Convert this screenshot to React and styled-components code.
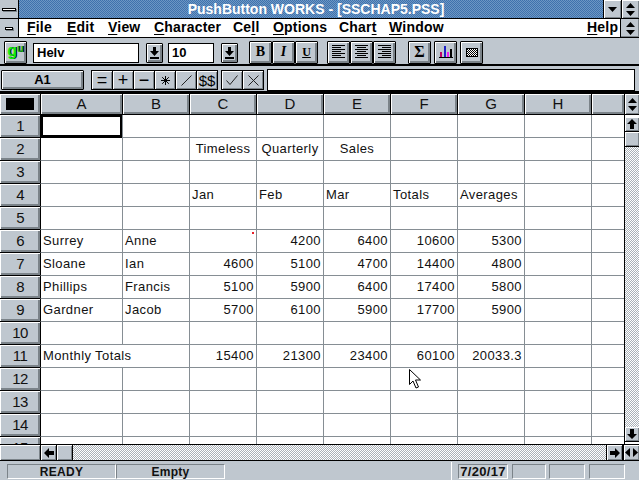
import React from 'react';
import styled, { createGlobalStyle } from 'styled-components';

const Global = createGlobalStyle`
  html, body { margin: 0; padding: 0; background: #c0c7cf; overflow: hidden; }
  * { box-sizing: border-box; }
`;

const FACE = '#bfc7cf';
const SHADE = '#7b8389';
const GRIDLINE = '#868e94';
const SYS = '"Liberation Sans", Arial, sans-serif';

const Screen = styled.div`
  position: relative;
  width: 639px;
  height: 480px;
  display: flex;
  flex-direction: column;
  background: ${FACE};
  font-family: ${SYS};
  overflow: hidden;
`;

const TitleBar = styled.div`
  display: flex;
  height: 19px;
  border-bottom: 1px solid #000;
`;
const TitleText = styled.div`
  flex: 1;
  padding-left: 10px;
  text-align: center;
  color: #fff;
  font-size: 14px;
  font-weight: bold;
  line-height: 18px;
  background: repeating-conic-gradient(#3f72ad 0 25%, #6d97c4 0 50%) 0 0 / 2px 2px;
`;
const SysBox = styled.div`
  width: 19px;
  flex: none;
  background: ${FACE};
  border-right: ${p => (p.$end ? 'none' : '1px solid #000')};
  border-left: ${p => (p.$end ? '1px solid #000' : 'none')};
  box-shadow: ${p => (p.$end ? 'inset -1px -1px 0 #7b8389' : 'none')};
  display: flex;
  align-items: center;
  justify-content: center;
`;
const SysBar = styled.span`
  display: block;
  width: ${p => p.$w}px;
  height: 1px;
  background: #fff;
  border: 1px solid #000;
  box-sizing: content-box;
  box-shadow: 1px 1px 0 ${SHADE};
`;
const CapButton = styled.div`
  width: 18px;
  flex: none;
  background: ${FACE};
  border-left: 1px solid #000;
  box-shadow: inset 1px 1px 0 #fff, inset -1px -1px 0 ${SHADE};
  display: flex;
  align-items: center;
  justify-content: center;
`;

const MenuBar = styled.div`
  display: flex;
  height: 19px;
  background: #fff;
  border-bottom: 1px solid #000;
`;
const MenuList = styled.div`
  flex: 1;
  display: flex;
  padding-left: 8px;
  font-size: 14px;
  font-weight: bold;
  line-height: 16px;
  color: #000;
`;
const MenuItem = styled.span`
  width: ${p => p.$w}px;
  flex: none;
  margin-left: ${p => p.$push || 0}px;
  letter-spacing: 0.2px;
  u { text-underline-offset: 2px; }
`;

const Toolbar = styled.div`
  display: flex;
  align-items: center;
  height: 28px;
  padding: 3px 0 0 4px;
  border-bottom: 2px solid #000;
`;
const ToolButton = styled.div`
  width: 23px;
  height: 23px;
  flex: none;
  margin-left: ${p => p.$gap || 0}px;
  background: ${FACE};
  border: 1px solid #000;
  border-radius: 1px;
  box-shadow: inset 1px 1px 0 #fff, inset -2px -2px 0 ${SHADE};
  display: flex;
  align-items: center;
  justify-content: center;
  padding-bottom: 1px;
  font-family: "Liberation Serif", serif;
  font-weight: bold;
  font-size: ${p => p.$size || 14}px;
  color: #000;
`;
const LogoG = styled.span`
  font-family: ${SYS};
  font-size: 16px;
  line-height: 16px;
  margin-top: -3px;
  color: #12ee12;
  text-shadow: 1px 0 0 #000;
`;
const LogoU = styled(LogoG)`
  font-size: 11px;
  line-height: 11px;
  margin-top: -7px;
  color: #18b018;
`;
const FontField = styled.div`
  width: ${p => p.$w}px;
  height: 20px;
  flex: none;
  margin-left: ${p => p.$gap || 0}px;
  background: #fff;
  border: 1px solid #000;
  font-size: 13px;
  font-weight: bold;
  line-height: 18px;
  padding-left: 3px;
`;
const DropButton = styled.div`
  width: 17px;
  height: 20px;
  flex: none;
  margin-left: ${p => p.$gap}px;
  background: ${FACE};
  border: 1px solid #000;
  border-radius: 1px;
  box-shadow: inset 1px 1px 0 #fff, inset -2px -2px 0 ${SHADE};
  display: flex;
  align-items: center;
  justify-content: center;
`;

const FormulaBar = styled.div`
  display: flex;
  align-items: flex-start;
  height: 28px;
  padding: 3px 4px 0 0;
  border-bottom: 3px solid #000;
`;
const CellRef = styled.div`
  width: 83px;
  height: 20px;
  flex: none;
  margin: 1px 0 0 1px;
  background: ${FACE};
  border: 1px solid #000;
  border-radius: 1px;
  box-shadow: inset 1px 1px 0 #fff, inset -2px -2px 0 ${SHADE};
  text-align: center;
  font-size: 13px;
  font-weight: bold;
  line-height: 17px;
`;
const OpGroup = styled.div`
  display: flex;
  flex: none;
  margin: 1px 0 0 ${p => p.$gap}px;
`;
const OpButton = styled.div`
  width: 22px;
  height: 20px;
  margin-right: -1px;
  background: ${FACE};
  border: 1px solid #000;
  box-shadow: inset 1px 1px 0 #fff, inset -1px -1px 0 ${SHADE};
  display: flex;
  align-items: center;
  justify-content: center;
  font-size: ${p => p.$size || 16}px;
  color: #000;
`;
const EntryField = styled.div`
  flex: 1;
  height: 22px;
  margin-left: 4px;
  background: #fff;
  border: 1px solid #000;
`;

const SheetRow = styled.div`
  display: flex;
  height: 350px;
`;
const Sheet = styled.div`
  flex: 1;
  display: grid;
  grid-template-columns: 40px 82px 67px 67px 67px 67px 67px 67px 67px 33px;
  grid-template-rows: 21px;
  grid-auto-rows: 23px;
  overflow: hidden;
  background: #fff;
  font-size: 13px;
  letter-spacing: 0.4px;
  color: #111;
`;
const ColHead = styled.div`
  background: ${FACE};
  border-left: 1px solid #000;
  border-bottom: 1px solid #000;
  box-shadow: inset 1px 1px 0 #fff, inset -2px -2px 0 ${SHADE};
  text-align: center;
  font-size: 15px;
  line-height: 20px;
  letter-spacing: 0;
  color: #111;
`;
const Corner = styled.div`
  background: ${FACE};
  border-bottom: 1px solid #000;
  box-shadow: inset 1px 1px 0 #fff, inset -2px -2px 0 ${SHADE};
  display: flex;
  align-items: center;
  justify-content: center;
  &::before {
    content: '';
    width: 28px;
    height: 12px;
    background: #000;
  }
`;
const RowHead = styled.div`
  background: ${FACE};
  border-bottom: 1px solid #000;
  box-shadow: inset 1px 1px 0 #fff, inset -2px -2px 0 ${SHADE};
  text-align: center;
  font-size: 15px;
  line-height: 22px;
  letter-spacing: -0.6px;
  color: #111;
`;
const Cell = styled.div`
  position: relative;
  grid-column: span ${p => p.$span || 1};
  border-left: 1px solid ${p => (p.$first ? '#000' : GRIDLINE)};
  border-bottom: 1px solid ${GRIDLINE};
  line-height: 22px;
  padding: 0 2px;
  white-space: nowrap;
  text-align: ${p => p.$align || 'left'};
  ${p => p.$active && 'box-shadow: inset 0 0 0 2px #000; border-bottom-color: #000;'}
`;
const RedDot = styled.span`
  position: absolute;
  right: 2px;
  top: 2px;
  width: 2px;
  height: 2px;
  background: #e8202a;
`;

const VScroll = styled.div`
  width: 15px;
  flex: none;
  display: flex;
  flex-direction: column;
  background: #fff;
  border-left: 1px solid #000;
`;
const Dither = styled.div`
  flex: 1;
  background: repeating-conic-gradient(#aab1b8 0 25%, #fff 0 50%) 0 0 / 2px 2px;
`;
const ScrollBtn = styled.div`
  height: ${p => p.$h}px;
  flex: none;
  margin-bottom: ${p => p.$after || 0}px;
  background: ${FACE};
  border-bottom: 1px solid #000;
  box-shadow: inset 1px 1px 0 #fff, inset -1px -1px 0 ${SHADE};
  display: flex;
  align-items: center;
  justify-content: center;
`;

const HScroll = styled.div`
  display: flex;
  height: 17px;
  border-top: 1px solid #000;
  border-bottom: 1px solid #000;
`;
const HSpacer = styled.div`
  width: 41px;
  flex: none;
  background: ${FACE};
  border-right: 1px solid #000;
  box-shadow: inset 1px 1px 0 #fff, inset -1px -1px 0 ${SHADE};
`;
const HBtn = styled.div`
  width: ${p => p.$w}px;
  flex: none;
  background: ${FACE};
  border-right: ${p => (p.$end ? 'none' : '1px solid #000')};
  border-left: ${p => (p.$left ? '1px solid #000' : 'none')};
  box-shadow: inset 1px 1px 0 #fff, inset -1px -1px 0 ${SHADE};
  display: flex;
  align-items: center;
  justify-content: center;
`;

const StatusBar = styled.div`
  position: relative;
  flex: 1;
  display: flex;
  align-items: flex-end;
  padding: 0 0 1px 7px;
`;
const StatusCell = styled.div`
  width: ${p => p.$w}px;
  height: 15px;
  flex: none;
  margin-left: ${p => p.$gap || 0}px;
  border-top: 1px solid ${SHADE};
  border-left: 1px solid ${SHADE};
  border-right: 1px solid #fff;
  border-bottom: 1px solid #fff;
  text-align: center;
  font-size: 12px;
  font-weight: bold;
  line-height: 14px;
  letter-spacing: 0.3px;
  color: #111;
`;
const DateCell = styled(StatusCell)`
  font-size: 13px;
  background: #c8ced4;
`;
const StatusDivider = styled.span`
  position: absolute;
  left: 451px;
  top: 1px;
  bottom: 0;
  width: 1px;
  background: #fff;
`;

const Pointer = styled.svg`
  position: absolute;
  left: 409px;
  top: 369px;
`;
const Glyph = styled.svg`
  display: block;
  flex: none;
`;

const UpDown = () => (
  <Glyph width="9" height="13" viewBox="0 0 9 13">
    <path d="M4.5 0 9 5H0zM4.5 13 0 8h9z" fill="#000" />
  </Glyph>
);
const ArrowDownBar = () => (
  <Glyph width="9" height="12" viewBox="0 0 9 12">
    <path d="M3 0h3v4h3L4.5 9 0 4h3zM0 10h9v2H0z" fill="#000" />
  </Glyph>
);
const Arrow = ({ dir }) => {
  const rot = { up: 0, right: 90, down: 180, left: 270 }[dir];
  return (
    <Glyph width="10" height="10" viewBox="0 0 10 10">
      <path d="M5 0 10 5H7v5H3V5H0z" fill="#000" transform={`rotate(${rot} 5 5)`} />
    </Glyph>
  );
};
const AlignIcon = ({ mode }) => {
  const lines = [0, 1, 2, 3, 4, 5, 6];
  return (
    <Glyph width="13" height="14" viewBox="0 0 13 14">
      {lines.map(i => {
        const w = i % 2 === 0 ? 13 : 9;
        const x = mode === 'left' ? 0 : mode === 'center' ? (13 - w) / 2 : 13 - w;
        return <rect key={i} x={x} y={i * 2} width={w} height="1" fill="#000" />;
      })}
    </Glyph>
  );
};

const columns = ['A', 'B', 'C', 'D', 'E', 'F', 'G', 'H', ''];

const rows = [
  [],
  [null, null, 'Timeless', 'Quarterly', 'Sales'],
  [],
  [null, null, 'Jan', 'Feb', 'Mar', 'Totals', 'Averages'],
  [],
  ['Surrey', 'Anne', null, '4200', '6400', '10600', '5300'],
  ['Sloane', 'Ian', '4600', '5100', '4700', '14400', '4800'],
  ['Phillips', 'Francis', '5100', '5900', '6400', '17400', '5800'],
  ['Gardner', 'Jacob', '5700', '6100', '5900', '17700', '5900'],
  [],
  ['Monthly Totals', null, '15400', '21300', '23400', '60100', '20033.3'],
  [], [], [], [],
];

const cellAlign = (r, v) => {
  if (r === 1) return 'center';
  return v && /^[\d.]+$/.test(v) ? 'right' : 'left';
};

export default function App() {
  return (
    <Screen>
      <Global />
      <TitleBar>
        <SysBox><SysBar $w={12} /></SysBox>
        <TitleText>PushButton WORKS - [SSCHAP5.PSS]</TitleText>
        <CapButton>
          <Glyph width="9" height="5" viewBox="0 0 9 5"><path d="M0 0h9L4.5 5z" fill="#000" /></Glyph>
        </CapButton>
        <CapButton><UpDown /></CapButton>
      </TitleBar>

      <MenuBar>
        <SysBox><SysBar $w={6} /></SysBox>
        <MenuList>
          <MenuItem $w={40}><u>F</u>ile</MenuItem>
          <MenuItem $w={41}><u>E</u>dit</MenuItem>
          <MenuItem $w={46}><u>V</u>iew</MenuItem>
          <MenuItem $w={79}><u>C</u>haracter</MenuItem>
          <MenuItem $w={40}>Ce<u>l</u>l</MenuItem>
          <MenuItem $w={66}><u>O</u>ptions</MenuItem>
          <MenuItem $w={50}>Char<u>t</u></MenuItem>
          <MenuItem $w={60}><u>W</u>indow</MenuItem>
          <MenuItem $w={32} $push={138}><u>H</u>elp</MenuItem>
        </MenuList>
        <SysBox $end><UpDown /></SysBox>
      </MenuBar>

      <Toolbar>
        <ToolButton>
          <LogoG>g</LogoG>
          <LogoU>u</LogoU>
        </ToolButton>
        <FontField $w={106} $gap={6}>Helv</FontField>
        <DropButton $gap={7}><ArrowDownBar /></DropButton>
        <FontField $w={46} $gap={5}>10</FontField>
        <DropButton $gap={7}><ArrowDownBar /></DropButton>
        <ToolButton $gap={11}>B</ToolButton>
        <ToolButton><i>I</i></ToolButton>
        <ToolButton $size={12}><u>U</u></ToolButton>
        <ToolButton $gap={9}><AlignIcon mode="left" /></ToolButton>
        <ToolButton><AlignIcon mode="center" /></ToolButton>
        <ToolButton><AlignIcon mode="right" /></ToolButton>
        <ToolButton $gap={12} $size={16}>Σ</ToolButton>
        <ToolButton $gap={3}>
          <Glyph width="14" height="13" viewBox="0 0 14 13">
            <rect x="1" y="6" width="2" height="5" fill="#c0006a" />
            <rect x="5" y="0" width="2" height="11" fill="#1e22c8" />
            <rect x="8" y="6" width="2" height="5" fill="#f020f0" />
            <rect x="11" y="3" width="2" height="8" fill="#000" />
            <rect x="0" y="11" width="14" height="1" fill="#000" />
          </Glyph>
        </ToolButton>
        <ToolButton $gap={3}>
          <Glyph width="12" height="9" viewBox="0 0 12 9">
            <defs>
              <pattern id="checker" width="2" height="2" patternUnits="userSpaceOnUse">
                <rect width="2" height="2" fill="#fff" />
                <rect width="1" height="1" fill="#000" />
                <rect x="1" y="1" width="1" height="1" fill="#000" />
              </pattern>
            </defs>
            <rect width="12" height="9" fill="url(#checker)" />
            <rect x=".5" y=".5" width="11" height="8" fill="none" stroke="#000" />
          </Glyph>
        </ToolButton>
      </Toolbar>

      <FormulaBar>
        <CellRef>A1</CellRef>
        <OpGroup $gap={7}>
          <OpButton $size={18}>=</OpButton>
          <OpButton $size={18}>+</OpButton>
          <OpButton $size={18}>−</OpButton>
          <OpButton>
            <Glyph width="9" height="9" viewBox="0 0 9 9">
              <path d="M4.5 0v9M0 4.5h9M1.2 1.2l6.6 6.6M7.8 1.2 1.2 7.8" stroke="#000" fill="none" />
            </Glyph>
          </OpButton>
          <OpButton>
            <Glyph width="11" height="11" viewBox="0 0 11 11"><path d="M.5 10.5l10-10" stroke="#222" fill="none" /></Glyph>
          </OpButton>
          <OpButton $size={15}>$$</OpButton>
        </OpGroup>
        <OpGroup $gap={4}>
          <OpButton>
            <Glyph width="12" height="10" viewBox="0 0 12 10"><path d="M.5 5.5l3.5 4 7.5-9" stroke="#222" fill="none" /></Glyph>
          </OpButton>
          <OpButton>
            <Glyph width="11" height="11" viewBox="0 0 11 11"><path d="M.5.5l10 10M10.5.5l-10 10" stroke="#222" fill="none" /></Glyph>
          </OpButton>
        </OpGroup>
        <EntryField />
      </FormulaBar>

      <SheetRow>
        <Sheet>
          <Corner />
          {columns.map((c, i) => <ColHead key={i}>{c}</ColHead>)}
          {rows.map((cells, r) => (
            <React.Fragment key={r}>
              <RowHead>{r + 1}</RowHead>
              {columns.map((_, c) => {
                const v = cells[c] || null;
                if (r === 10 && c === 1) return null;
                return (
                  <Cell
                    key={c}
                    $first={c === 0}
                    $span={r === 10 && c === 0 ? 2 : 1}
                    $active={r === 0 && c === 0}
                    $align={cellAlign(r, v)}
                  >
                    {v}
                    {r === 5 && c === 2 && <RedDot />}
                  </Cell>
                );
              })}
            </React.Fragment>
          ))}
        </Sheet>
        <VScroll>
          <ScrollBtn $h={21} $after={2}><UpDown /></ScrollBtn>
          <ScrollBtn $h={15}><Arrow dir="up" /></ScrollBtn>
          <ScrollBtn $h={15} />
          <Dither />
          <ScrollBtn $h={15} $after={2}><Arrow dir="down" /></ScrollBtn>
        </VScroll>
      </SheetRow>

      <HScroll>
        <HSpacer />
        <HBtn $w={16}><Arrow dir="left" /></HBtn>
        <HBtn $w={16} />
        <Dither />
        <HBtn $w={17} $left><Arrow dir="right" /></HBtn>
        <HBtn $w={16} $left $end>
          <Glyph width="13" height="9" viewBox="0 0 13 9">
            <path d="M0 4.5 5 0v9zM13 4.5 8 0v9z" fill="#000" />
          </Glyph>
        </HBtn>
      </HScroll>

      <StatusBar>
        <StatusDivider />
        <StatusCell $w={109}>READY</StatusCell>
        <StatusCell $w={109}>Empty</StatusCell>
        <DateCell $w={50} $gap={233}>7/20/17</DateCell>
        <StatusCell $w={34} $gap={4} />
        <StatusCell $w={36} $gap={3} />
        <StatusCell $w={36} $gap={4} />
      </StatusBar>

      <Pointer width="13" height="21" viewBox="0 0 13 21">
        <path d="M.5.5v15l3.5-3.5 3 7 2.5-1-3-7h5z" fill="#fff" stroke="#000" />
      </Pointer>
    </Screen>
  );
}
